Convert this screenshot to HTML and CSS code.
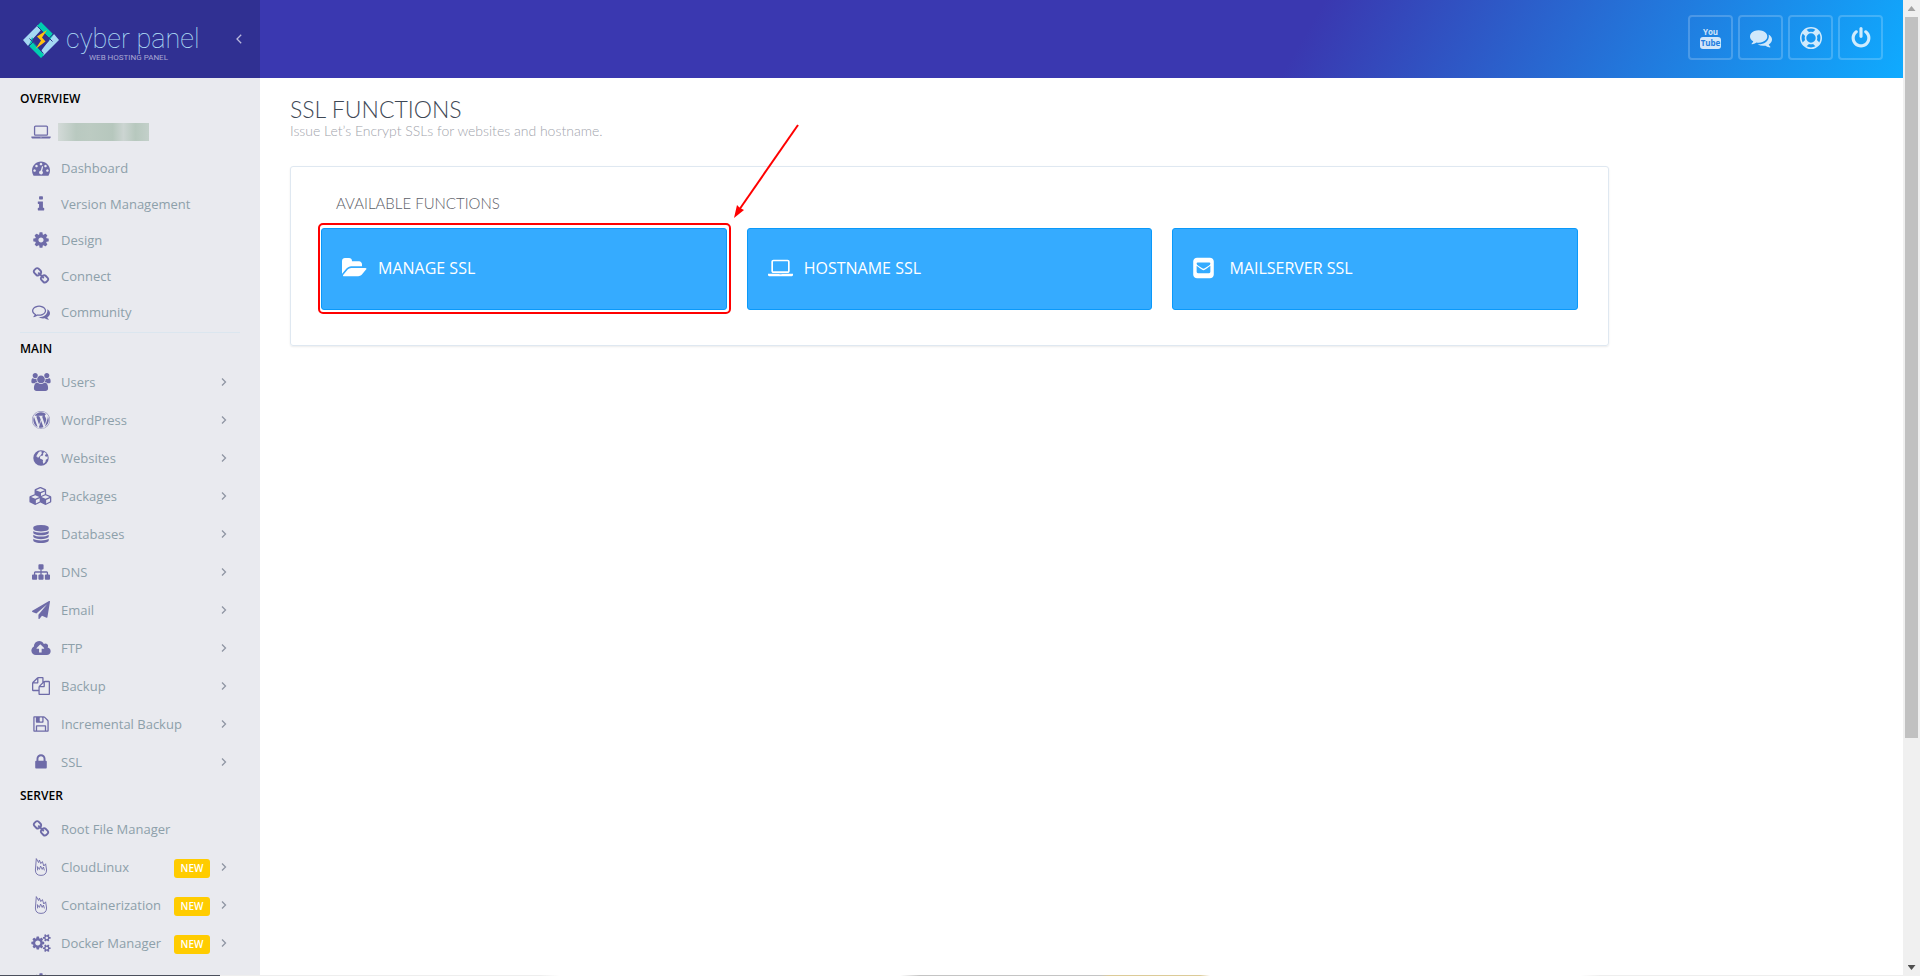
FILE: index.html
```
<!DOCTYPE html>
<html lang="en">
<head>
    <meta charset="UTF-8">
    <meta name="viewport" content="width=device-width, initial-scale=1.0">
    <title>SSL Functions - CyberPanel</title>
    <link rel="stylesheet" href="styles.css">
</head>
<body>
    <!-- icon set -->
    <svg class="sprite" aria-hidden="true">
        <symbol id="i-laptop" viewBox="0 0 1920 1792"><path d="M416 1280q-66 0-113-47t-47-113v-704q0-66 47-113t113-47h1088q66 0 113 47t47 113v704q0 66-47 113t-113 47h-1088zm-32-864v704q0 13 9.5 22.5t22.5 9.5h1088q13 0 22.5-9.5t9.5-22.5v-704q0-13-9.5-22.5t-22.5-9.5h-1088q-13 0-22.5 9.5t-9.5 22.5zm1376 928h160v96q0 40-47 68t-113 28h-1600q-66 0-113-28t-47-68v-96h1760zm-720 96q16 0 16-16t-16-16h-160q-16 0-16 16t16 16h160z"/></symbol>
        <symbol id="i-dashboard" viewBox="0 0 1792 1792"><path d="M384 1152q0-53-37.5-90.5t-90.5-37.5-90.5 37.5-37.5 90.5 37.5 90.5 90.5 37.5 90.5-37.5 37.5-90.5zm192-448q0-53-37.5-90.5t-90.5-37.5-90.5 37.5-37.5 90.5 37.5 90.5 90.5 37.5 90.5-37.5 37.5-90.5zm428 481l101-382q6-26-7.5-48.5t-38.5-29.5-48 6.5-30 39.5l-101 382q-60 5-107 43.5t-63 98.5q-20 77 20 146t117 89 146-20 89-117q16-60-6-117t-72-91zm660-33q0-53-37.5-90.5t-90.5-37.5-90.5 37.5-37.5 90.5 37.5 90.5 90.5 37.5 90.5-37.5 37.5-90.5zm-640-640q0-53-37.5-90.5t-90.5-37.5-90.5 37.5-37.5 90.5 37.5 90.5 90.5 37.5 90.5-37.5 37.5-90.5zm448 192q0-53-37.5-90.5t-90.5-37.5-90.5 37.5-37.5 90.5 37.5 90.5 90.5 37.5 90.5-37.5 37.5-90.5zm320 448q0 261-141 483-19 29-54 29h-1402q-35 0-54-29-141-221-141-483 0-182 71-348t191-286 286-191 348-71 348 71 286 191 191 286 71 348z"/></symbol>
        <symbol id="i-info" viewBox="0 0 1792 1792"><path d="M1216 1344v128q0 26-19 45t-45 19h-512q-26 0-45-19t-19-45v-128q0-26 19-45t45-19h64v-384h-64q-26 0-45-19t-19-45v-128q0-26 19-45t45-19h384q26 0 45 19t19 45v576h64q26 0 45 19t19 45zm-128-1152v192q0 26-19 45t-45 19h-256q-26 0-45-19t-19-45v-192q0-26 19-45t45-19h256q26 0 45 19t19 45z"/></symbol>
        <symbol id="i-cog" viewBox="0 0 1792 1792"><path d="M1152 896q0-106-75-181t-181-75-181 75-75 181 75 181 181 75 181-75 75-181zm512-109v222q0 12-8 23t-20 13l-185 28q-19 54-39 91 35 50 107 138 10 12 10 25t-9 23q-27 37-99 108t-94 71q-12 0-26-9l-138-108q-44 23-91 38-16 136-29 186-7 28-36 28h-222q-14 0-24.5-8.5t-11.5-21.5l-28-184q-49-16-90-37l-141 107q-10 9-25 9-14 0-25-11-126-114-165-168-7-10-7-23 0-12 8-23 15-21 51-66.5t54-70.5q-27-50-41-99l-183-27q-13-2-21-12.5t-8-23.5v-222q0-12 8-23t19-13l186-28q14-46 39-92-40-57-107-138-10-12-10-24 0-10 9-23 26-36 98.5-107.5t94.5-71.5q13 0 26 10l138 107q44-23 91-38 16-136 29-186 7-28 36-28h222q14 0 24.5 8.5t11.5 21.5l28 184q49 16 90 37l142-107q9-9 24-9 13 0 25 10 129 119 165 170 7 8 7 22 0 12-8 23-15 21-51 66.5t-54 70.5q26 50 41 98l183 28q13 2 21 12.5t8 23.5z"/></symbol>
        <symbol id="i-link" viewBox="0 0 1792 1792"><path d="M1520 1216q0-40-28-68l-208-208q-28-28-68-28-42 0-72 32 3 3 19 18.5t21.5 21.5 15 19 13 25.5 3.5 27.5q0 40-28 68t-68 28q-15 0-27.5-3.5t-25.5-13-19-15-21.5-21.5-18.5-19q-33 31-33 73 0 40 28 68l206 207q27 27 68 27 40 0 68-26l147-146q28-28 28-67zm-703-705q0-40-28-68l-206-207q-28-28-68-28-39 0-68 27l-147 146q-28 28-28 67 0 40 28 68l208 208q27 27 68 27 42 0 72-31-3-3-19-18.5t-21.5-21.5-15-19-13-25.5-3.5-27.5q0-40 28-68t68-28q15 0 27.5 3.5t25.5 13 19 15 21.5 21.5 18.5 19q33-31 33-73zm895 705q0 120-85 203l-147 146q-83 83-203 83-121 0-204-85l-206-207q-83-83-83-203 0-123 88-209l-88-88q-86 88-208 88-120 0-204-84l-208-208q-84-84-84-204t85-203l147-146q83-83 203-83 121 0 204 85l206 207q83 83 83 203 0 123-88 209l88 88q86-88 208-88 120 0 204 84l208 208q84 84 84 204z"/></symbol>
        <symbol id="i-comments-o" viewBox="0 0 1792 1792"><path d="M704 384q-153 0-286 52t-211.5 141-78.5 191q0 82 53 158t149 132l97 56-35 84q34-20 62-39l44-31 53 10q78 14 153 14 153 0 286-52t211.5-141 78.5-191-78.5-191-211.5-141-286-52zm0-128q191 0 353.5 68.5t256.5 186.5 94 257-94 257-256.5 186.5-353.5 68.5q-86 0-176-16-124 88-278 128-36 9-86 16h-3q-11 0-20.5-8t-11.5-21q-1-3-1-6.5t.5-6.5 2-6l2.5-5 3.5-5.5 4-5 4.5-5 4-4.5q5-6 23-25t26-29.5 22.5-29 25-38.5 20.5-44q-124-72-195-177t-71-224q0-139 94-257t256.5-186.5 353.5-68.5zm822 1169q10 24 20.5 44t25 38.5 22.5 29 26 29.5 23 25q1 1 4 4.5t4.5 5 4 5 3.5 5.5l2.5 5 2 6 .5 6.5-1 6.5q-3 14-13 22t-22 7q-50-7-86-16-154-40-278-128-90 16-176 16-271 0-472-132 58 4 88 4 161 0 309-45t264-129q125-92 192-212t67-254q0-77-23-152 129 71 204 178t75 230q0 120-71 224.5t-195 176.5z"/></symbol>
        <symbol id="i-comments" viewBox="0 0 1792 1792"><path d="M1408 768q0 139-94 257t-256.5 186.5-353.5 68.5q-86 0-176-16-124 88-278 128-36 9-86 16h-3q-11 0-20.5-8t-11.5-21q-1-3-1-6.5t.5-6.5 2-6l2.5-5 3.5-5.5 4-5 4.5-5 4-4.5q5-6 23-25t26-29.5 22.5-29 25-38.5 20.5-44q-124-72-195-177t-71-224q0-139 94-257t256.5-186.5 353.5-68.5 353.5 68.5 256.5 186.5 94 257zm384 256q0 120-71 224.5t-195 176.5q10 24 20.5 44t25 38.5 22.5 29 26 29.5 23 25q1 1 4 4.5t4.5 5 4 5 3.5 5.5l2.5 5 2 6 .5 6.5-1 6.5q-3 14-13 22t-22 7q-50-7-86-16-154-40-278-128-90 16-176 16-271 0-472-132 58 4 88 4 161 0 309-45t264-129q125-92 192-212t67-254q0-77-23-152 129 71 204 178t75 230z"/></symbol>
        <symbol id="i-users" viewBox="0 0 1920 1792"><path d="M593 896q-162 5-265 128h-134q-82 0-138-40.5t-56-118.5q0-353 124-353 6 0 43.5 21t97.5 42.5 119 21.5q67 0 133-23-5 37-5 66 0 139 81 256zm1071 637q0 120-73 189.5t-194 69.5h-874q-121 0-194-69.5t-73-189.5q0-53 3.5-103.5t14-109 26.5-108.5 43-97.5 62-81 85.5-53.5 111.5-20q10 0 43 21.5t73 48 107 48 135 21.5 135-21.5 107-48 73-48 43-21.5q61 0 111.5 20t85.5 53.5 62 81 43 97.5 26.5 108.5 14 109 3.5 103.5zm-1024-1277q0 106-75 181t-181 75-181-75-75-181 75-181 181-75 181 75 75 181zm704 384q0 159-112.5 271.5t-271.5 112.5-271.5-112.5-112.5-271.5 112.5-271.5 271.5-112.5 271.5 112.5 112.5 271.5zm576 225q0 78-56 118.5t-138 40.5h-134q-103-123-265-128 81-117 81-256 0-29-5-66 66 23 133 23 59 0 119-21.5t97.5-42.5 43.5-21q124 0 124 353zm-128-609q0 106-75 181t-181 75-181-75-75-181 75-181 181-75 181 75 75 181z"/></symbol>
        <symbol id="i-wordpress" viewBox="0 0 1792 1792"><path d="M127 896q0-163 67-313l367 1005q-196-95-315-281t-119-411zm1288-39q0 19-2.5 38.5t-10 49.5-11.5 44-17.5 59-17.5 58l-76 256-278-826q46-3 88-8 19-2 26-18.5t-2.5-31-28.5-13.5l-205 10q-75-1-202-10-12-1-20.5 5t-11.5 15-1.5 18.5 9 16.5 19.5 8l80 8 120 328-168 504-280-832q46-3 88-8 19-2 26-18.5t-2.5-31-28.5-13.5l-205 10q-7 0-23-.5t-26-.5q105-160 274.5-253.5t367.5-93.5q147 0 280.5 53t238.5 149h-10q-55 0-92 40.5t-37 95.5q0 12 2 24t4 21.5 8 23 9 21 12 22.5 12.5 21 14.5 24 14 23q63 107 63 212zm-506 106l237 647q1 6 5 11-126 44-255 44-112 0-217-32zm661-436q95 174 95 369 0 209-104 385.5t-279 278.5l235-678q59-169 59-276 0-42-6-79zm-674-527q182 0 348 71t286 191 191 286 71 348-71 348-191 286-286 191-348 71-348-71-286-191-191-286-71-348 71-348 191-286 286-191 348-71zm0 1751q173 0 331.5-68t273-182.5 182.5-273 68-331.5-68-331.5-182.5-273-273-182.5-331.5-68-331.5 68-273 182.5-182.5 273-68 331.5 68 331.5 182.5 273 273 182.5 331.5 68z"/></symbol>
        <symbol id="i-globe" viewBox="0 0 1792 1792"><path fill-rule="evenodd" d="M896 128a768 768 0 1 1 0 1536a768 768 0 1 1 0-1536zM700 270l190-40 110 60-80 80 90 50-130 110 70 60-130 60-110 120-60 80-90 10-20-90-120-20 60-130 100-160zM1180 270q180 80 280 240l-120 40-60 140 150 80 110-40q30 120 12 250l-170 100-40 190q-90 140-210 190l-60-190 30-140-110-110-150-20-60-150 80-150 180-30 80-90-40-100 80-70z"/></symbol>
        <symbol id="i-cubes" viewBox="0 0 2304 1792"><path d="M640 1632l384-192v-314l-384 164v342zm-64-454l404-173-404-173-404 173zm1088 454l384-192v-314l-384 164v342zm-64-454l404-173-404-173-404 173zm-448-293l384-165v-266l-384 164v267zm-64-379l441-189-441-189-441 189zm1088 518v416q0 36-19 67t-52 47l-448 224q-25 14-57 14t-57-14l-448-224q-4-2-7-4-2 2-7 4l-448 224q-25 14-57 14t-57-14l-448-224q-33-16-52-47t-19-67v-416q0-38 21.5-70t56.5-48l434-186v-400q0-38 21.5-70t56.5-48l448-192q23-10 50-10t50 10l448 192q35 16 56.5 48t21.5 70v400l434 186q36 16 57 48t21 70z"/></symbol>
        <symbol id="i-database" viewBox="0 0 1792 1792"><path d="M896 768q237 0 443-43t325-127v170q0 69-103 128t-280 93.5-385 34.5-385-34.5-280-93.5-103-128v-170q119 84 325 127t443 43zm0 768q237 0 443-43t325-127v170q0 69-103 128t-280 93.5-385 34.5-385-34.5-280-93.5-103-128v-170q119 84 325 127t443 43zm0-384q237 0 443-43t325-127v170q0 69-103 128t-280 93.5-385 34.5-385-34.5-280-93.5-103-128v-170q119 84 325 127t443 43zm0-1152q208 0 385 34.5t280 93.5 103 128v128q0 69-103 128t-280 93.5-385 34.5-385-34.5-280-93.5-103-128v-128q0-69 103-128t280-93.5 385-34.5z"/></symbol>
        <symbol id="i-sitemap" viewBox="0 0 1792 1792"><path d="M1792 1248v320q0 40-28 68t-68 28h-320q-40 0-68-28t-28-68v-320q0-40 28-68t68-28h96v-192h-512v192h96q40 0 68 28t28 68v320q0 40-28 68t-68 28h-320q-40 0-68-28t-28-68v-320q0-40 28-68t68-28h96v-192h-512v192h96q40 0 68 28t28 68v320q0 40-28 68t-68 28h-320q-40 0-68-28t-28-68v-320q0-40 28-68t68-28h96v-192q0-52 38-90t90-38h512v-192h-96q-40 0-68-28t-28-68v-320q0-40 28-68t68-28h320q40 0 68 28t28 68v320q0 40-28 68t-68 28h-96v192h512q52 0 90 38t38 90v192h96q40 0 68 28t28 68z"/></symbol>
        <symbol id="i-plane" viewBox="0 0 1792 1792"><path d="M1764 11q33 24 27 64l-256 1536q-5 29-32 45-14 8-31 8-11 0-24-5l-453-185-242 295q-18 23-49 23-13 0-22-4-19-7-30.5-23.5t-11.5-36.5v-349l864-1059-1069 925-395-162q-37-14-40-55-2-40 32-59l1664-960q15-9 32-9 20 0 36 11z"/></symbol>
        <symbol id="i-cloud" viewBox="0 0 1920 1792"><path d="M1280 928q0-14-9-23l-352-352q-9-9-23-9t-23 9l-351 351q-10 12-10 24 0 14 9 23t23 9h224v352q0 13 9.5 22.5t22.5 9.5h192q13 0 22.5-9.5t9.5-22.5v-352h224q13 0 22.5-9.5t9.5-22.5zm640 288q0 159-112.5 271.5t-271.5 112.5h-1088q-185 0-316.5-131.5t-131.5-316.5q0-130 70-240t188-165q-2-30-2-43 0-212 150-362t362-150q156 0 285.5 87t188.5 231q71-62 166-62 106 0 181 75t75 181q0 76-41 138 130 31 213.5 135.5t83.5 238.5z"/></symbol>
        <symbol id="i-files" viewBox="0 0 1792 1792"><path d="M1696 384q40 0 68 28t28 68v1216q0 40-28 68t-68 28h-960q-40 0-68-28t-28-68v-288h-544q-40 0-68-28t-28-68v-672q0-40 20-88t48-76l408-408q28-28 76-48t88-20h416q40 0 68 28t28 68v328q68-40 128-40h416zm-544 213l-299 299h299v-299zm-640-384l-299 299h299v-299zm196 647l316-316v-416h-384v416q0 40-28 68t-68 28h-416v640h512v-256q0-40 20-88t48-76zm956 804v-1152h-384v416q0 40-28 68t-68 28h-416v640h896z"/></symbol>
        <symbol id="i-floppy" viewBox="0 0 1792 1792"><path d="M512 1536h768v-384h-768v384zm896 0h128v-896q0-14-10-38.5t-20-34.5l-281-281q-10-10-34-20t-39-10v416q0 40-28 68t-68 28h-576q-40 0-68-28t-28-68v-416h-128v1280h128v-416q0-40 28-68t68-28h832q40 0 68 28t28 68v416zm-384-928v-320q0-13-9.5-22.5t-22.5-9.5h-192q-13 0-22.5 9.5t-9.5 22.5v320q0 13 9.5 22.5t22.5 9.5h192q13 0 22.5-9.5t9.5-22.5zm640 32v928q0 40-28 68t-68 28h-1344q-40 0-68-28t-28-68v-1344q0-40 28-68t68-28h928q40 0 88 20t76 48l280 280q28 28 48 76t20 88z"/></symbol>
        <symbol id="i-lock" viewBox="0 0 1792 1792"><path d="M640 768h512v-192q0-106-75-181t-181-75-181 75-75 181v192zm832 96v576q0 40-28 68t-68 28h-960q-40 0-68-28t-28-68v-576q0-40 28-68t68-28h32v-192q0-184 132-316t316-132 316 132 132 316v192h32q40 0 68 28t28 68z"/></symbol>
        <symbol id="i-fire" viewBox="0 0 18 18"><path fill="none" stroke="currentColor" stroke-width=".9" stroke-linejoin="round" d="M4.300 .6L6.600 4.600 7.400 2 8.800 5.600 10.400 3.600 11.800 8 13.600 5.800 14.600 12Q14.400 17.400 9 17.400 3.400 17.400 3.400 12zM5.600 12.400L5.400 8.600 7.400 11.400 8.600 8 10.200 11.400 11.400 9 12.400 12.400"/></symbol>
        <symbol id="i-cogs" viewBox="0 0 1920 1792"><path d="M896 896q0-106-75-181t-181-75-181 75-75 181 75 181 181 75 181-75 75-181zm768 512q0-52-38-90t-90-38-90 38-38 90q0 53 37.5 90.5t90.5 37.5 90.5-37.5 37.5-90.5zm0-1024q0-52-38-90t-90-38-90 38-38 90q0 53 37.5 90.5t90.5 37.5 90.5-37.5 37.5-90.5zm-384 421v185q0 10-7 19.5t-16 10.5l-155 24q-11 35-32 76 34 48 90 115 7 11 7 20 0 12-7 19-23 30-82.5 89.5t-78.5 59.5q-11 0-21-7l-115-90q-37 19-77 31-11 108-23 155-7 24-30 24h-186q-11 0-20-7.5t-10-17.5l-23-153q-34-10-75-31l-118 89q-7 7-20 7-11 0-21-8-144-133-144-160 0-9 7-19 10-14 41-53t47-61q-23-44-35-82l-152-24q-10-1-17-9.5t-7-19.5v-185q0-10 7-19.5t16-10.5l155-24q11-35 32-76-34-48-90-115-7-11-7-20 0-12 7-20 22-30 82-89t79-59q11 0 21 7l115 90q34-18 77-32 11-108 23-154 7-24 30-24h186q11 0 20 7.5t10 17.5l23 153q34 10 75 31l118-89q8-7 20-7 11 0 21 8 144 133 144 160 0 8-7 19-12 16-42 54t-45 60q23 48 34 82l152 23q10 2 17 10.5t7 19.5zm640 533v140q0 16-149 31-12 27-30 52 51 113 51 138 0 4-4 7-122 71-124 71-8 0-46-47t-52-68q-20 2-30 2t-30-2q-14 21-52 68t-46 47q-2 0-124-71-4-3-4-7 0-25 51-138-18-25-30-52-149-15-149-31v-140q0-16 149-31 13-29 30-52-51-113-51-138 0-4 4-7 4-2 35-20t59-34 30-16q8 0 46 46.5t52 67.5q20-2 30-2t30 2q51-71 92-112l6-2q4 0 124 70 4 3 4 7 0 25-51 138 17 23 30 52 149 15 149 31zm0-1024v140q0 16-149 31-12 27-30 52 51 113 51 138 0 4-4 7-122 71-124 71-8 0-46-47t-52-68q-20 2-30 2t-30-2q-14 21-52 68t-46 47q-2 0-124-71-4-3-4-7 0-25 51-138-18-25-30-52-149-15-149-31v-140q0-16 149-31 13-29 30-52-51-113-51-138 0-4 4-7 4-2 35-20t59-34 30-16q8 0 46 46.5t52 67.5q20-2 30-2t30 2q51-71 92-112l6-2q4 0 124 70 4 3 4 7 0 25-51 138 17 23 30 52 149 15 149 31z"/></symbol>
        <symbol id="i-power" viewBox="0 0 1792 1792"><path d="M1664 896q0 156-61 298t-164 245-245 164-298 61-298-61-245-164-164-245-61-298q0-182 80.5-343t226.5-270q43-32 95.5-25t83.5 50q32 42 24.5 94.5t-49.5 84.5q-98 74-151.5 181t-53.5 228q0 104 40.5 198.5t109.5 163.5 163.5 109.5 198.5 40.5 198.5-40.5 163.5-109.5 109.5-163.5 40.5-198.5q0-121-53.5-228t-151.5-181q-42-32-49.5-84.5t24.5-94.5q31-43 84-50t95 25q146 109 226.5 270t80.5 343zm-640-768v640q0 52-38 90t-90 38-90-38-38-90v-640q0-52 38-90t90-38 90 38 38 90z"/></symbol>
        <symbol id="i-ring" viewBox="0 0 1792 1792"><path d="M896 0q182 0 348 71t286 191 191 286 71 348-71 348-191 286-286 191-348 71-348-71-286-191-191-286-71-348 71-348 191-286 286-191 348-71zm0 128q-190 0-361 90l194 194q82-28 167-28t167 28l194-194q-171-90-361-90zm-678 1129l194-194q-28-82-28-167t28-167l-194-194q-90 171-90 361t90 361zm678 407q190 0 361-90l-194-194q-82 28-167 28t-167-28l-194 194q171 90 361 90zm0-384q159 0 271.5-112.5t112.5-271.5-112.5-271.5-271.5-112.5-271.5 112.5-112.5 271.5 112.5 271.5 271.5 112.5zm484-217l194 194q90-171 90-361t-90-361l-194 194q28 82 28 167t-28 167z"/></symbol>
        <symbol id="i-folder" viewBox="0 0 1920 1792"><path d="M1879 952q0 31-31 66l-336 396q-43 51-120.5 86.5t-143.5 35.5h-1088q-34 0-60.5-13t-26.5-43q0-31 31-66l336-396q43-51 120.5-86.5t143.5-35.5h1088q34 0 60.5 13t26.5 43zm-343-344v160h-832q-94 0-197 47.5t-164 119.5l-337 396-5 6q0-4-.5-12.5t-.5-12.5v-960q0-92 66-158t158-66h320q92 0 158 66t66 158v32h544q92 0 158 66t66 158z"/></symbol>
        <symbol id="i-envelope" viewBox="128 0 1536 1792"><path fill-rule="evenodd" d="M416 128h960q119 0 203.500 84.500t84.500 203.500v960q0 119-84.500 203.500t-203.500 84.500h-960q-119 0-203.500-84.500t-84.500-203.500v-960q0-119 84.500-203.500t203.500-84.500zM384 736v448q0 96 96 96h832q96 0 96-96v-448q-60 60-390 280-122 80-244 0-330-220-390-280zM384 570q0 66 120 150l300 200q92 60 184 0l300-200q120-84 120-150v-10q0-80-80-80h-864q-80 0-80 80z"/></symbol>
        <symbol id="i-right" viewBox="0 0 6 10"><path fill="none" stroke="currentColor" stroke-width="1.300" d="M1 1.500l3.500 3.500-3.500 3.500"/></symbol>
        <symbol id="i-left" viewBox="0 0 6 10"><path fill="none" stroke="currentColor" stroke-width="1.300" d="M5.200.8l-4.200 4.200 4.200 4.200"/></symbol>
    </svg>

    <div class="window">
        <div class="page">
            <header class="header">
                <div class="brand">
                    <a class="logo" href="#">
                        <svg class="logo-mark" viewBox="0 0 36 36" aria-hidden="true">
                            <path fill="#a5d8f3" d="M0 18L15 3l3 6-8 8-5 7z"/>
                            <path fill="#00ceb0" d="M14 4l4-4 12 12-2 9-7-10z"/>
                            <path fill="#a5d8f3" d="M36 18L20 34l-2-7 8-8 5-7z"/>
                            <path fill="#00ceb0" d="M21 33l-3 3L6 24l3-9 6 10z"/>
                            <path fill="none" stroke="#30308f" d="M14.500 4.500l15 15M6 24l9-9M30 12l-9 10M6.500 16.500l14 15"/>
                            <path fill="#30308f" d="M18 8l9 9-9 12-9-11z"/>
                            <path fill="#ffc20e" d="M24 8l-10 6.500 4 4-5.500 8.500 10-7.500-3.500-4z"/>
                        </svg>
                        <span class="logo-text">
                            <span class="logo-name">cyber panel</span>
                            <span class="logo-sub">WEB HOSTING PANEL</span>
                        </span>
                    </a>
                    <button class="collapse" type="button" aria-label="Collapse sidebar"><svg><use href="#i-left"/></svg></button>
                </div>
                <nav class="actions">
                    <a class="action youtube" href="#" aria-label="Youtube">
                        <span class="you">You</span>
                        <span class="tube">Tube</span>
                    </a>
                    <a class="action" href="#" aria-label="Forums"><svg><use href="#i-comments"/></svg></a>
                    <a class="action" href="#" aria-label="Support"><svg><use href="#i-ring"/></svg></a>
                    <a class="action" href="#" aria-label="Logout"><svg><use href="#i-power"/></svg></a>
                </nav>
            </header>

            <div class="body">
                <nav class="sidebar">
                    <h2 class="group first">OVERVIEW</h2>
                    <ul class="menu compact">
                        <li><a href="#" aria-label="Server address"><svg class="icon"><use href="#i-laptop"/></svg><span class="masked"></span></a></li>
                        <li><a href="#"><svg class="icon"><use href="#i-dashboard"/></svg><span>Dashboard</span></a></li>
                        <li><a href="#"><svg class="icon"><use href="#i-info"/></svg><span>Version Management</span></a></li>
                        <li><a href="#"><svg class="icon"><use href="#i-cog"/></svg><span>Design</span></a></li>
                        <li><a href="#"><svg class="icon"><use href="#i-link"/></svg><span>Connect</span></a></li>
                        <li><a href="#"><svg class="icon"><use href="#i-comments-o"/></svg><span>Community</span></a></li>
                    </ul>
                    <hr class="divider">
                    <h2 class="group">MAIN</h2>
                    <ul class="menu">
                        <li><a href="#"><svg class="icon"><use href="#i-users"/></svg><span>Users</span><svg class="arrow"><use href="#i-right"/></svg></a></li>
                        <li><a href="#"><svg class="icon"><use href="#i-wordpress"/></svg><span>WordPress</span><svg class="arrow"><use href="#i-right"/></svg></a></li>
                        <li><a href="#"><svg class="icon"><use href="#i-globe"/></svg><span>Websites</span><svg class="arrow"><use href="#i-right"/></svg></a></li>
                        <li><a href="#"><svg class="icon"><use href="#i-cubes"/></svg><span>Packages</span><svg class="arrow"><use href="#i-right"/></svg></a></li>
                        <li><a href="#"><svg class="icon"><use href="#i-database"/></svg><span>Databases</span><svg class="arrow"><use href="#i-right"/></svg></a></li>
                        <li><a href="#"><svg class="icon"><use href="#i-sitemap"/></svg><span>DNS</span><svg class="arrow"><use href="#i-right"/></svg></a></li>
                        <li><a href="#"><svg class="icon"><use href="#i-plane"/></svg><span>Email</span><svg class="arrow"><use href="#i-right"/></svg></a></li>
                        <li><a href="#"><svg class="icon"><use href="#i-cloud"/></svg><span>FTP</span><svg class="arrow"><use href="#i-right"/></svg></a></li>
                        <li><a href="#"><svg class="icon"><use href="#i-files"/></svg><span>Backup</span><svg class="arrow"><use href="#i-right"/></svg></a></li>
                        <li><a href="#"><svg class="icon"><use href="#i-floppy"/></svg><span>Incremental Backup</span><svg class="arrow"><use href="#i-right"/></svg></a></li>
                        <li><a href="#"><svg class="icon"><use href="#i-lock"/></svg><span>SSL</span><svg class="arrow"><use href="#i-right"/></svg></a></li>
                    </ul>
                    <h2 class="group">SERVER</h2>
                    <ul class="menu">
                        <li><a href="#"><svg class="icon"><use href="#i-link"/></svg><span>Root File Manager</span></a></li>
                        <li><a href="#"><svg class="icon"><use href="#i-fire"/></svg><span>CloudLinux</span><b class="badge">NEW</b><svg class="arrow"><use href="#i-right"/></svg></a></li>
                        <li><a href="#"><svg class="icon"><use href="#i-fire"/></svg><span>Containerization</span><b class="badge">NEW</b><svg class="arrow"><use href="#i-right"/></svg></a></li>
                        <li><a href="#"><svg class="icon"><use href="#i-cogs"/></svg><span>Docker Manager</span><b class="badge">NEW</b><svg class="arrow"><use href="#i-right"/></svg></a></li>
                        <li><a href="#" aria-label="Services"><svg class="icon"><use href="#i-cog"/></svg></a></li>
                    </ul>
                </nav>

                <main class="content">
                    <h1 class="title">SSL FUNCTIONS</h1>
                    <p class="subtitle">Issue Let’s Encrypt SSLs for websites and hostname.</p>
                    <section class="panel">
                        <h3 class="panel-title">AVAILABLE FUNCTIONS</h3>
                        <div class="tiles">
                            <div class="marked">
                                <a class="tile" href="#"><svg><use href="#i-folder"/></svg><span>MANAGE SSL</span></a>
                                <svg class="pointer" viewBox="0 0 70 96" aria-hidden="true">
                                    <path fill="none" stroke="#f00" stroke-width="2" d="M67 1L8 86"/>
                                    <path fill="#f00" d="M3 94l3-13 3 3 4 2z"/>
                                </svg>
                            </div>
                            <a class="tile" href="#"><svg><use href="#i-laptop"/></svg><span>HOSTNAME SSL</span></a>
                            <a class="tile" href="#"><svg class="narrow"><use href="#i-envelope"/></svg><span>MAILSERVER SSL</span></a>
                        </div>
                    </section>
                </main>
            </div>
            <div class="status"></div>
        </div>

        <div class="scrollbar" aria-hidden="true">
            <i class="up"></i>
            <div class="track"><div class="thumb"></div></div>
            <i class="down"></i>
        </div>
    </div>
</body>
</html>
```

FILE: styles.css
```
*{
    margin: 0;
    padding: 0;
    box-sizing: border-box;
}
body{
    font-family: "Open Sans", "Liberation Sans", sans-serif;
    font-size: 13px;
    background-color: #fff;
    overflow: hidden;
}
a{
    color: inherit;
    text-decoration: none;
}
ul{
    list-style: none;
}
svg{
    fill: currentColor;
    flex: none;
}
.sprite{
    display: none;
}
.window{
    display: flex;
    height: 100vh;
}
.page{
    flex: 1;
    min-width: 0;
    display: flex;
    flex-direction: column;
}

/* header */
.header{
    flex: none;
    height: 78px;
    display: flex;
    justify-content: space-between;
    align-items: stretch;
    background: linear-gradient(120deg, #3a38b0 68%, #0fabff 100%);
}
.brand{
    width: 260px;
    padding: 0 16px 0 23px;
    display: flex;
    align-items: center;
    justify-content: space-between;
    background-color: #303092;
}
.logo{
    display: flex;
    align-items: center;
    gap: 7px;
    padding-top: 2px;
}
.logo-mark{
    width: 36px;
    height: 36px;
}
.logo-text{
    display: flex;
    flex-direction: column;
    padding-top: 8px;
}
.logo-name{
    font-family: Roboto, "Liberation Sans", sans-serif;
    font-size: 27px;
    font-weight: 100;
    line-height: 28px;
    color: #b4e0fa;
}
.logo-sub{
    font-family: Roboto, "Liberation Sans", sans-serif;
    font-size: 8px;
    line-height: 10px;
    padding-left: 23px;
    color: #a9a8d2;
}
.collapse{
    width: 10px;
    height: 20px;
    border: none;
    background: none;
    color: #b9b8dc;
}
.collapse svg{
    width: 6px;
    height: 10px;
}
.actions{
    display: flex;
    gap: 5px;
    padding: 15px 20px 0 0;
}
.action{
    width: 45px;
    height: 45px;
    display: flex;
    align-items: center;
    justify-content: center;
    border: 2px solid rgba(255, 255, 255, 0.2);
    border-radius: 4px;
    color: rgba(255, 255, 255, 0.8);
}
.action svg{
    width: 22px;
    height: 22px;
}
.youtube{
    flex-direction: column;
    font-size: 8px;
    font-weight: 700;
    text-align: center;
}
.you{
    line-height: 10px;
}
.tube{
    padding: 0 1px;
    border-radius: 3px;
    line-height: 12px;
    background-color: rgba(255, 255, 255, 0.8);
    color: #237ddf;
}

/* sidebar */
.body{
    flex: 1;
    min-height: 0;
    display: flex;
}
.sidebar{
    flex: none;
    width: 260px;
    overflow: hidden;
    background-color: #e9eaef;
}
.group{
    height: 29px;
    padding-left: 20px;
    font-size: 12px;
    font-weight: 600;
    line-height: 29px;
    color: #000;
}
.first{
    height: 36px;
    line-height: 41px;
}
.menu a{
    height: 38px;
    display: flex;
    align-items: center;
    padding: 0 33px 0 29px;
    color: #8da0aa;
}
.compact a{
    height: 36px;
}
.icon{
    width: 24px;
    height: 18px;
    margin-right: 8px;
    color: #6e6ba8;
}
.masked{
    width: 91px;
    height: 18px;
    margin-left: -3px;
    background: linear-gradient(90deg, #d3dad8, #b9c9c0 20%, #bccbc2 35%, #b6c7bd 60%, #ccd5d2 72%, #b7c8be 85%, #c3d0ca);
}
.arrow{
    width: 6px;
    height: 10px;
    margin-left: auto;
    color: #8f96a3;
}
.badge{
    width: 36px;
    height: 19px;
    margin-top: 2px;
    margin-left: auto;
    border-radius: 3px;
    background-color: #fc0;
    color: #fff;
    font-size: 10px;
    font-weight: 600;
    line-height: 19px;
    text-align: center;
}
.badge + .arrow{
    margin-left: 11px;
}
.divider{
    height: 1px;
    margin: 2px 20px 1px;
    border: none;
    background-color: #dbe6ef;
}

/* content */
.content{
    flex: 1;
    padding: 17px 30px;
}
.title{
    font-family: Lato, "Open Sans", sans-serif;
    font-size: 23px;
    font-weight: 300;
    line-height: 28px;
    color: #3e4855;
}
.subtitle{
    font-family: Lato, "Open Sans", sans-serif;
    font-size: 14px;
    font-weight: 300;
    line-height: 16px;
    color: #a2a4ac;
}
.panel{
    width: 83.333%;
    margin-top: 27px;
    padding: 25px 30px 35px;
    border: 1px solid #dfe8f1;
    border-radius: 3px;
    box-shadow: 0 1px 2px rgba(0, 0, 0, 0.08);
}
.panel-title{
    padding-left: 15px;
    margin-bottom: 14px;
    font-family: Lato, "Open Sans", sans-serif;
    font-size: 15px;
    font-weight: 300;
    line-height: 22px;
    color: #5c6068;
}
.tiles{
    display: grid;
    grid-template-columns: repeat(3, 1fr);
    gap: 20px;
}
.tile{
    height: 82px;
    display: flex;
    align-items: center;
    padding: 0 20px 2px;
    border: 1px solid #0a99fa;
    border-radius: 3px;
    background-color: #35abff;
    color: #fff;
    font-size: 16px;
}
.tile svg{
    width: 25px;
    height: 24px;
    margin-right: 11px;
}
.tile .narrow{
    width: 21px;
    margin-right: 15px;
}
/* red callout around the first tile */
.marked{
    position: relative;
}
.marked::before{
    content: "";
    position: absolute;
    inset: -5px -4px -4px -3px;
    border: 2px solid #f00;
    border-radius: 5px;
}
.pointer{
    position: absolute;
    left: 100%;
    bottom: 90px;
    width: 70px;
    height: 96px;
    margin-left: 4px;
}

/* bottom edge */
.status{
    flex: none;
    height: 1px;
    background: linear-gradient(90deg, #4b4f5c 220px, #eee 220px, #eee 540px, #fff 560px, #fff 900px, #c4c4c4 920px, #c4c4c4 1100px, #dccb98 1110px, #dccb98 1200px, #fff 1210px, #fff 1580px, #eee 1600px);
}

/* scrollbar */
.scrollbar{
    flex: none;
    width: 17px;
    display: flex;
    flex-direction: column;
    align-items: center;
    background-color: #f0f0f0;
}
.track{
    flex: 1;
    width: 13px;
}
.thumb{
    height: 76.5%;
    background-color: #c1c1c1;
}
.up,
.down{
    width: 8px;
    height: 17px;
    background: linear-gradient(#a3a3a3, #a3a3a3) center / 8px 6px no-repeat;
    clip-path: polygon(50% 6px, 100% 11px, 0 11px);
}
.down{
    background: linear-gradient(#505050, #505050) center / 8px 6px no-repeat;
    clip-path: polygon(0 6px, 100% 6px, 50% 11px);
}
```
